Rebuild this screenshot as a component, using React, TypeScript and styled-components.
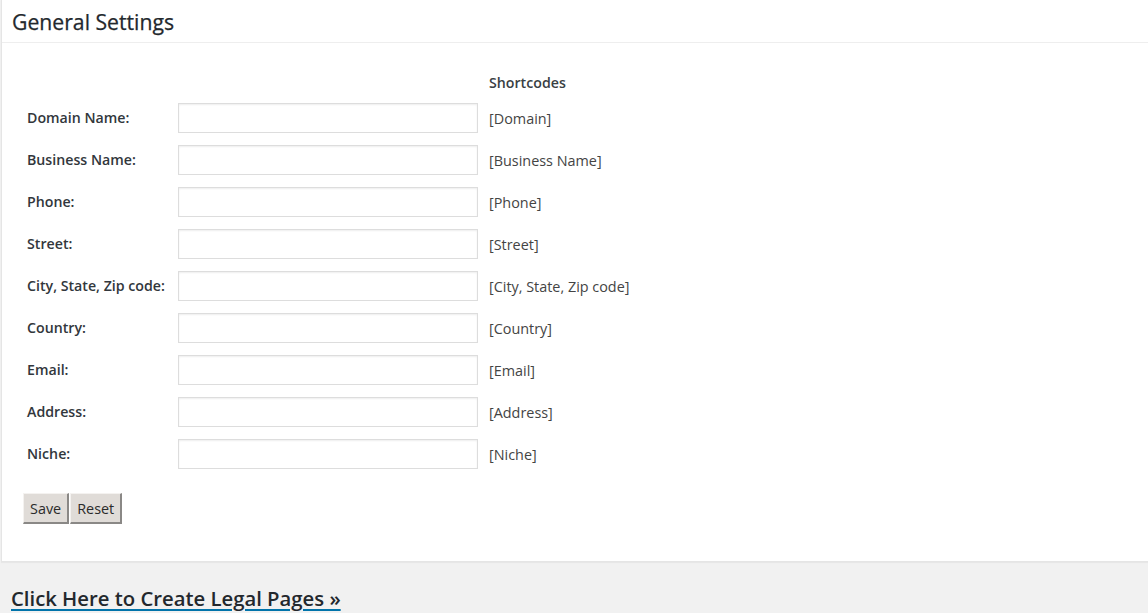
import React from "react";
import styled, { createGlobalStyle } from "styled-components";

const Global = createGlobalStyle`
  html, body { margin: 0; padding: 0; }
  body {
    background: #f1f1f1;
    font-family: "Open Sans", "Liberation Sans", sans-serif;
    color: #444;
    font-size: 14.4px;
    overflow: hidden;
  }
`;

const Page = styled.div`
  display: flex;
  flex-direction: column;
`;

const Panel = styled.section`
  margin-left: 1px;
  margin-right: -1px;
  background: #fff;
  border: 1px solid #e5e5e5;
  border-top: none;
  box-shadow: 0 1px 1px rgba(0, 0, 0, 0.04);
`;

const PanelHeader = styled.h2`
  margin: 0;
  height: 42px;
  padding: 0 10px;
  display: flex;
  align-items: center;
  border-bottom: 1px solid #eee;
  font-size: 21.2px;
  font-weight: 400;
  color: #23282d;
  -webkit-text-stroke: 0.25px #23282d;
`;

const PanelBody = styled.div`
  padding: 30px 20px 37px 20px;
`;

const FormGrid = styled.div`
  display: grid;
  grid-template-columns: 156px 300px auto;
  align-items: center;
`;

const HeadCell = styled.div<{ $col: number }>`
  grid-column: ${(p) => p.$col};
  height: 20px;
  line-height: 20px;
  margin-bottom: 4px;
  padding-left: 11px;
  font-size: 14.2px;
  font-weight: 600;
  color: #3a3f44;
`;

const Label = styled.label`
  padding-left: 5px;
  font-size: 14.2px;
  font-weight: 600;
  color: #32373c;
  line-height: 42px;
`;

const Field = styled.input`
  box-sizing: border-box;
  width: 300px;
  height: 30px;
  margin: 6px 0;
  border: 1px solid #ddd;
  box-shadow: inset 0 1px 2px rgba(0, 0, 0, 0.07);
  background: #fff;
  font: inherit;
  padding: 3px 5px;
  outline: none;
`;

const Code = styled.span`
  padding-left: 11px;
  color: #444;
`;

const ButtonRow = styled.div`
  display: flex;
  gap: 1px;
  margin-top: 18px;
  margin-left: 1px;
`;

const Button = styled.button`
  height: 31px;
  padding: 0 6px;
  font-family: "Open Sans", "Liberation Sans", sans-serif;
  font-size: 14.4px;
  color: #2b2b2b;
  background: #e0dcd8;
  border-style: solid;
  border-width: 1px 2px 2px 1px;
  border-color: #f4f2f0 #8a8886 #8a8886 #f4f2f0;
  cursor: pointer;
`;

const Footer = styled.div`
  padding: 22px 11px 0 11px;
`;

const BigLink = styled.a`
  font-size: 20.3px;
  font-weight: 600;
  color: #23282d;
  text-decoration: underline;
  text-decoration-color: #0073aa;
  text-underline-offset: 3px;
`;

const fields: [string, string][] = [
  ["Domain Name:", "[Domain]"],
  ["Business Name:", "[Business Name]"],
  ["Phone:", "[Phone]"],
  ["Street:", "[Street]"],
  ["City, State, Zip code:", "[City, State, Zip code]"],
  ["Country:", "[Country]"],
  ["Email:", "[Email]"],
  ["Address:", "[Address]"],
  ["Niche:", "[Niche]"],
];

export default function App() {
  return (
    <Page>
      <Global />
      <Panel>
        <PanelHeader>General Settings</PanelHeader>
        <PanelBody>
          <FormGrid>
            <HeadCell $col={3}>Shortcodes</HeadCell>
            {fields.map(([label, code]) => (
              <React.Fragment key={label}>
                <Label>{label}</Label>
                <Field type="text" />
                <Code>{code}</Code>
              </React.Fragment>
            ))}
          </FormGrid>
          <ButtonRow>
            <Button>Save</Button>
            <Button>Reset</Button>
          </ButtonRow>
        </PanelBody>
      </Panel>
      <Footer>
        <BigLink href="#">Click Here to Create Legal Pages »</BigLink>
      </Footer>
    </Page>
  );
}
